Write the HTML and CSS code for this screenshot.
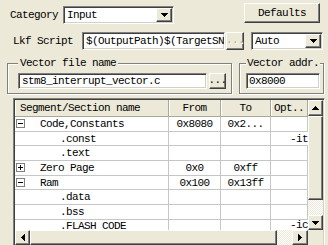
FILE: index.html
```html
<!DOCTYPE HTML>
<html lang="en">
  <head>
    <title>Linker settings</title>
    <meta charset="utf-8">
    <link rel="stylesheet" href="styles.css">
  </head>
  <body>

  <div class="row row-top">
    <span class="label label-cat">Category</span>
    <div class="combo combo-cat sunken">
      <span class="combo-text">Input</span>
      <span class="combo-btn raised"><svg width="7" height="4"><path d="M0 0H7V1H6V2H5V3H4V4H3V3H2V2H1V1H0Z"/></svg></span>
    </div>
    <div class="btn raised btn-defaults">Defaults</div>
  </div>

  <div class="row row-lkf">
    <span class="label label-lkf">Lkf Script</span>
    <div class="field sunken field-lkf">$(OutputPath)$(TargetSN</div>
    <div class="btn raised btn-dots btn-off">...</div>
    <div class="combo combo-auto sunken">
      <span class="combo-text">Auto</span>
      <span class="combo-btn raised"><svg width="7" height="4"><path d="M0 0H7V1H6V2H5V3H4V4H3V3H2V2H1V1H0Z"/></svg></span>
    </div>
  </div>

  <div class="row row-groups">
    <fieldset class="group group-file">
      <legend>Vector file name</legend>
      <div class="group-body">
        <div class="field sunken field-file">stm8_interrupt_vector.c</div>
        <div class="btn raised btn-dots btn-file">...</div>
      </div>
    </fieldset>
    <fieldset class="group group-addr">
      <legend>Vector addr.</legend>
      <div class="group-body">
        <div class="field sunken field-addr">0x8000</div>
      </div>
    </fieldset>
  </div>

  <div class="grid-box">
    <div class="list">
      <div class="list-row list-head">
        <div class="cell head-cell head-name">Segment/Section name</div>
        <div class="cell head-cell">From</div>
        <div class="cell head-cell">To</div>
        <div class="cell head-cell">Opt..</div>
      </div>
      <div class="list-row">
        <div class="cell cell-name"><span class="tree-box minus"></span><span class="node">Code,Constants</span></div>
        <div class="cell">0x8080</div>
        <div class="cell">0x2...</div>
        <div class="cell"></div>
      </div>
      <div class="list-row">
        <div class="cell cell-name child">.const</div>
        <div class="cell"></div>
        <div class="cell"></div>
        <div class="cell cell-opt">-it</div>
      </div>
      <div class="list-row">
        <div class="cell cell-name child">.text</div>
        <div class="cell"></div>
        <div class="cell"></div>
        <div class="cell"></div>
      </div>
      <div class="list-row">
        <div class="cell cell-name"><span class="tree-box plus"></span><span class="node">Zero Page</span></div>
        <div class="cell">0x0</div>
        <div class="cell">0xff</div>
        <div class="cell"></div>
      </div>
      <div class="list-row">
        <div class="cell cell-name"><span class="tree-box minus"></span><span class="node">Ram</span></div>
        <div class="cell">0x100</div>
        <div class="cell">0x13ff</div>
        <div class="cell"></div>
      </div>
      <div class="list-row">
        <div class="cell cell-name child">.data</div>
        <div class="cell"></div>
        <div class="cell"></div>
        <div class="cell"></div>
      </div>
      <div class="list-row">
        <div class="cell cell-name child">.bss</div>
        <div class="cell"></div>
        <div class="cell"></div>
        <div class="cell"></div>
      </div>
      <div class="list-row list-row-last">
        <div class="cell cell-name child">.FLASH CODE</div>
        <div class="cell"></div>
        <div class="cell"></div>
        <div class="cell cell-opt">-ic</div>
      </div>
    </div>

    <div class="vscroll">
      <span class="sb-btn raised sb-up"><svg width="7" height="4"><path d="M0 4H7V3H6V2H5V1H4V0H3V1H2V2H1V3H0Z"/></svg></span>
      <span class="sb-thumb raised"></span>
      <span class="sb-track"></span>
      <span class="sb-btn raised sb-down"><svg width="7" height="4"><path d="M0 0H7V1H6V2H5V3H4V4H3V3H2V2H1V1H0Z"/></svg></span>
    </div>

    <div class="hscroll">
      <span class="sb-btn raised sb-left"><svg width="4" height="7"><path d="M4 0V7H3V6H2V5H1V4H0V3H1V2H2V1H3V0Z"/></svg></span>
      <span class="sb-thumb raised"></span>
      <span class="sb-track"></span>
      <span class="sb-btn raised sb-right"><svg width="4" height="7"><path d="M0 0V7H1V6H2V5H3V4H4V3H3V2H2V1H1V0Z"/></svg></span>
    </div>

    <div class="corner"></div>
  </div>

  </body>
</html>
```

FILE: styles.css
```css
* {
  box-sizing: border-box;
}
html {
  height: 100%;
}
body {
  margin: 0;
  padding: 0;
  width: 328px;
  height: 245px;
  overflow: hidden;
  background: #ece9d8;
  color: #000;
  font-family: "Liberation Mono", monospace;
  font-size: 11px;
  letter-spacing: -0.6px;
  line-height: 14px;
}

svg {
  display: block;
  fill: #000;
  shape-rendering: crispEdges;
}

/* 3d borders */
.sunken {
  background: #fff;
  border: 1px solid;
  border-color: #808080 #fff #fff #808080;
  box-shadow: inset 1px 1px 0 #404040, inset -1px -1px 0 #d4d0c8;
}
.raised {
  background: #ece9d8;
  border: 1px solid;
  border-color: #fff #404040 #404040 #fff;
  box-shadow: inset -1px -1px 0 #808080;
}

.row {
  display: flex;
}

.row-top {
  padding-top: 3px;
  height: 24px;
}
.label-cat {
  width: 53px;
  margin-left: 10px;
  margin-top: 5px;
}
.combo {
  display: flex;
  align-items: center;
  height: 18px;
  padding: 1px;
}
.combo-text {
  flex: 1;
  padding-left: 2px;
  white-space: nowrap;
  overflow: hidden;
}
.combo-btn {
  width: 16px;
  height: 14px;
  display: flex;
  align-items: center;
  justify-content: center;
}
.combo-cat {
  width: 111px;
  margin-top: 3px;
}

.btn {
  display: flex;
  align-items: center;
  justify-content: center;
  white-space: nowrap;
}
.btn-defaults {
  margin-left: auto;
  margin-right: 8px;
  width: 76px;
  height: 20px;
}

.row-lkf {
  margin-top: 8px;
  height: 18px;
}
.label-lkf {
  width: 69px;
  margin-left: 13px;
  line-height: 18px;
}
.field {
  height: 18px;
  padding: 1px 3px 0;
  line-height: 15px;
  white-space: nowrap;
  overflow: hidden;
}
.field-lkf {
  width: 143px;
}
.btn-dots {
  width: 18px;
  height: 18px;
  margin-left: 1px;
  padding-bottom: 2px;
}
.btn-off {
  color: #aca899;
  text-shadow: 1px 1px 0 #fff;
}
.combo-auto {
  width: 72px;
  margin-left: 7px;
}

/* group boxes */
.row-groups {
  margin-top: 7px;
}
.group {
  margin: 0;
  min-width: 0;
  padding: 4px 4px 4px 10px;
  border: 1px solid #808080;
  box-shadow: inset 1px 1px 0 #fff, 1px 1px 0 #fff;
}
.group legend {
  padding: 0 2px;
  line-height: 12px;
  white-space: nowrap;
  background: #ece9d8;
}
.group-body {
  display: flex;
}
.group-file {
  margin-left: 7px;
  width: 225px;
}
.group-addr {
  margin-left: 7px;
  width: 85px;
  padding-left: 6px;
  padding-right: 0;
}
.group-addr legend {
  padding: 0 1px;
}
.field-file {
  width: 189px;
  height: 16px;
  line-height: 13px;
}
.btn-file {
  width: 17px;
  height: 16px;
  margin-left: 2px;
}
.field-addr {
  width: 74px;
  height: 16px;
  line-height: 13px;
  padding-left: 2px;
}

/* list view */
.grid-box {
  margin-top: 4px;
  margin-left: 13px;
  width: 312px;
  height: 147px;
  padding: 1px 1px 0;
  border: 1px solid;
  border-bottom: none;
  border-color: #808080 #fff #fff #808080;
  box-shadow: inset 1px 1px 0 #404040, inset -1px 0 0 #d4d0c8;
  display: grid;
  grid-template-columns: 293px 15px;
  grid-template-rows: 130px 15px;
}
.list {
  background: #fff;
  overflow: hidden;
}
.list-row {
  display: grid;
  grid-template-columns: 154px 52px 50px 37px;
  height: 14.7px;
  border-bottom: 1px solid #c6c6c6;
}
.cell {
  border-right: 1px solid #c6c6c6;
  text-align: center;
  white-space: nowrap;
  overflow: hidden;
  line-height: 14px;
}
.list-row-last .cell {
  line-height: 11px;
}
.list-head {
  height: 17px;
  background: #ece9d8;
  border-bottom: 1px solid #aca899;
}
.head-cell {
  line-height: 16px;
  border-right: 1px solid #aca899;
  box-shadow: inset 1px 0 0 #fff;
}
.head-name {
  text-align: left;
  padding-left: 5px;
}
.cell-name {
  display: flex;
  align-items: center;
  text-align: left;
}
.cell-name.child {
  padding-left: 45px;
}
.node {
  margin-left: 15px;
}
.tree-box {
  position: relative;
  width: 9px;
  height: 9px;
  margin-left: 1px;
  border: 1px solid #808080;
  background: #fff;
}
.tree-box::before {
  content: "";
  position: absolute;
  left: 1px;
  top: 3px;
  width: 5px;
  height: 1px;
  background: #000;
}
.tree-box.plus::after {
  content: "";
  position: absolute;
  left: 3px;
  top: 1px;
  width: 1px;
  height: 5px;
  background: #000;
}
.cell-opt {
  text-align: right;
  border-right: none;
}

/* scroll bars */
.sb-btn {
  display: flex;
  align-items: center;
  justify-content: center;
}
.sb-track {
  background: repeating-conic-gradient(#fff 0 25%, #ece9d8 0 50%) 0 0 / 2px 2px;
}
.vscroll {
  display: flex;
  flex-direction: column;
}
.sb-up {
  height: 16px;
}
.vscroll .sb-thumb {
  height: 84px;
}
.vscroll .sb-track {
  flex: 1;
}
.sb-down {
  height: 15px;
}
.hscroll {
  display: flex;
}
.sb-left {
  width: 15px;
}
.hscroll .sb-thumb {
  width: 247px;
}
.hscroll .sb-track {
  flex: 1;
}
.sb-right {
  width: 16px;
}
.corner {
  background: #ece9d8;
}
```
